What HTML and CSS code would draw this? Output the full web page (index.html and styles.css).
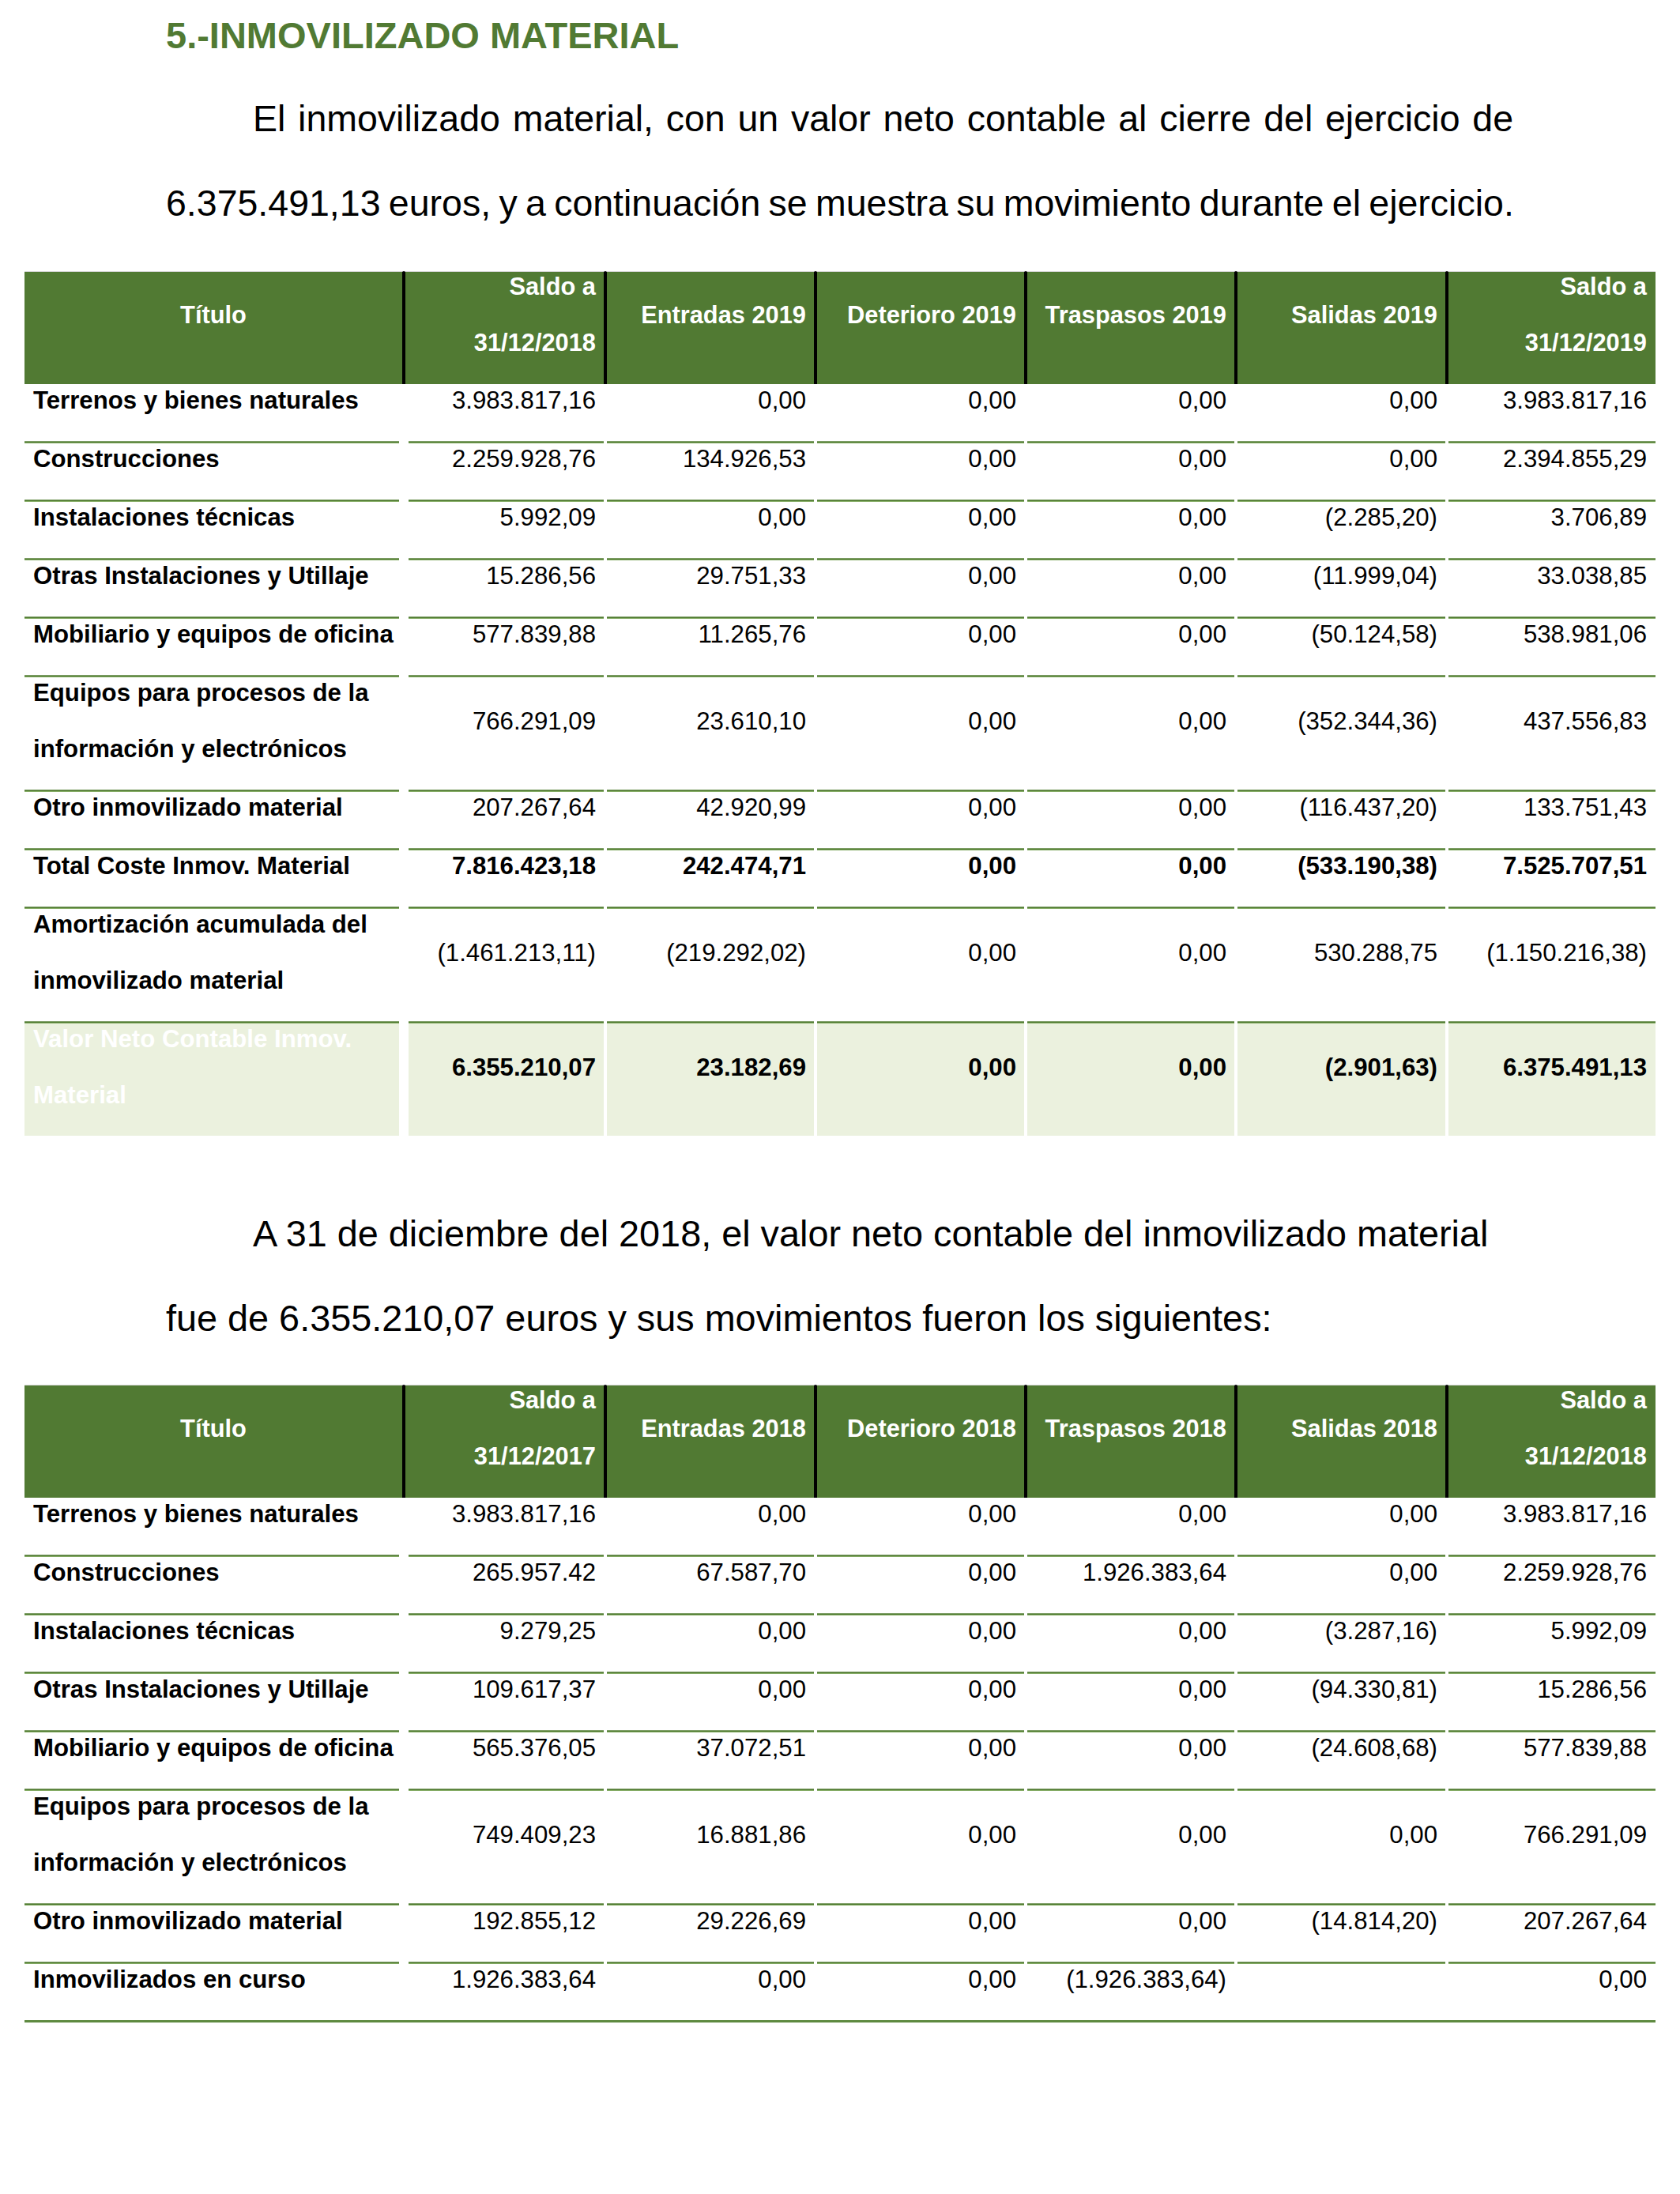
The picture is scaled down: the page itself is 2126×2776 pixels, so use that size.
FILE: index.html
```html
<!DOCTYPE html>
<html lang="es">
<head>
<meta charset="utf-8">
<title>5.-INMOVILIZADO MATERIAL</title>
<link rel="stylesheet" href="styles.css">
</head>
<body>
<div class="page">
  <h1 class="title">5.-INMOVILIZADO MATERIAL</h1>
  <p class="para">
    <span class="line first just">El inmovilizado material, con un valor neto contable al cierre del ejercicio de</span>
    <span class="line tight">6.375.491,13 euros, y a continuación se muestra su movimiento durante el ejercicio.</span>
  </p>

  <table class="tbl">
    <colgroup>
      <col class="w1"><col class="w2"><col class="w3"><col class="w3"><col class="w3"><col class="w6"><col class="w7">
    </colgroup>
    <thead>
      <tr>
        <th class="center"><div class="c">Título</div></th>
        <th><div class="c">Saldo a<br>31/12/2018</div></th>
        <th><div class="c">Entradas 2019</div></th>
        <th><div class="c">Deterioro 2019</div></th>
        <th><div class="c">Traspasos 2019</div></th>
        <th><div class="c">Salidas 2019</div></th>
        <th><div class="c">Saldo a<br>31/12/2019</div></th>
      </tr>
    </thead>
    <tbody>
      <tr class="first">
        <td class="lbl"><div class="c">Terrenos y bienes naturales</div></td>
        <td><div class="c">3.983.817,16</div></td><td><div class="c">0,00</div></td><td><div class="c">0,00</div></td><td><div class="c">0,00</div></td><td><div class="c">0,00</div></td><td><div class="c">3.983.817,16</div></td>
      </tr>
      <tr>
        <td class="lbl"><div class="c">Construcciones</div></td>
        <td><div class="c">2.259.928,76</div></td><td><div class="c">134.926,53</div></td><td><div class="c">0,00</div></td><td><div class="c">0,00</div></td><td><div class="c">0,00</div></td><td><div class="c">2.394.855,29</div></td>
      </tr>
      <tr>
        <td class="lbl"><div class="c">Instalaciones técnicas</div></td>
        <td><div class="c">5.992,09</div></td><td><div class="c">0,00</div></td><td><div class="c">0,00</div></td><td><div class="c">0,00</div></td><td><div class="c">(2.285,20)</div></td><td><div class="c">3.706,89</div></td>
      </tr>
      <tr>
        <td class="lbl"><div class="c">Otras Instalaciones y Utillaje</div></td>
        <td><div class="c">15.286,56</div></td><td><div class="c">29.751,33</div></td><td><div class="c">0,00</div></td><td><div class="c">0,00</div></td><td><div class="c">(11.999,04)</div></td><td><div class="c">33.038,85</div></td>
      </tr>
      <tr>
        <td class="lbl"><div class="c">Mobiliario y equipos de oficina</div></td>
        <td><div class="c">577.839,88</div></td><td><div class="c">11.265,76</div></td><td><div class="c">0,00</div></td><td><div class="c">0,00</div></td><td><div class="c">(50.124,58)</div></td><td><div class="c">538.981,06</div></td>
      </tr>
      <tr>
        <td class="lbl"><div class="c">Equipos para procesos de la<br>información y electrónicos</div></td>
        <td><div class="c">766.291,09</div></td><td><div class="c">23.610,10</div></td><td><div class="c">0,00</div></td><td><div class="c">0,00</div></td><td><div class="c">(352.344,36)</div></td><td><div class="c">437.556,83</div></td>
      </tr>
      <tr>
        <td class="lbl"><div class="c">Otro inmovilizado material</div></td>
        <td><div class="c">207.267,64</div></td><td><div class="c">42.920,99</div></td><td><div class="c">0,00</div></td><td><div class="c">0,00</div></td><td><div class="c">(116.437,20)</div></td><td><div class="c">133.751,43</div></td>
      </tr>
      <tr class="bold">
        <td class="lbl"><div class="c">Total Coste Inmov. Material</div></td>
        <td><div class="c">7.816.423,18</div></td><td><div class="c">242.474,71</div></td><td><div class="c">0,00</div></td><td><div class="c">0,00</div></td><td><div class="c">(533.190,38)</div></td><td><div class="c">7.525.707,51</div></td>
      </tr>
      <tr>
        <td class="lbl"><div class="c">Amortización acumulada del<br>inmovilizado material</div></td>
        <td><div class="c">(1.461.213,11)</div></td><td><div class="c">(219.292,02)</div></td><td><div class="c">0,00</div></td><td><div class="c">0,00</div></td><td><div class="c">530.288,75</div></td><td><div class="c">(1.150.216,38)</div></td>
      </tr>
      <tr class="bold net">
        <td class="lbl"><div class="c">Valor Neto Contable Inmov.<br>Material</div></td>
        <td><div class="c">6.355.210,07</div></td><td><div class="c">23.182,69</div></td><td><div class="c">0,00</div></td><td><div class="c">0,00</div></td><td><div class="c">(2.901,63)</div></td><td><div class="c">6.375.491,13</div></td>
      </tr>
    </tbody>
  </table>

  <p class="para para2">
    <span class="line first">A 31 de diciembre del 2018, el valor neto contable del inmovilizado material</span>
    <span class="line">fue de 6.355.210,07 euros y sus movimientos fueron los siguientes:</span>
  </p>

  <table class="tbl tbl2">
    <colgroup>
      <col class="w1"><col class="w2"><col class="w3"><col class="w3"><col class="w3"><col class="w6"><col class="w7">
    </colgroup>
    <thead>
      <tr>
        <th class="center"><div class="c">Título</div></th>
        <th><div class="c">Saldo a<br>31/12/2017</div></th>
        <th><div class="c">Entradas 2018</div></th>
        <th><div class="c">Deterioro 2018</div></th>
        <th><div class="c">Traspasos 2018</div></th>
        <th><div class="c">Salidas 2018</div></th>
        <th><div class="c">Saldo a<br>31/12/2018</div></th>
      </tr>
    </thead>
    <tbody>
      <tr class="first">
        <td class="lbl"><div class="c">Terrenos y bienes naturales</div></td>
        <td><div class="c">3.983.817,16</div></td><td><div class="c">0,00</div></td><td><div class="c">0,00</div></td><td><div class="c">0,00</div></td><td><div class="c">0,00</div></td><td><div class="c">3.983.817,16</div></td>
      </tr>
      <tr>
        <td class="lbl"><div class="c">Construcciones</div></td>
        <td><div class="c">265.957.42</div></td><td><div class="c">67.587,70</div></td><td><div class="c">0,00</div></td><td><div class="c">1.926.383,64</div></td><td><div class="c">0,00</div></td><td><div class="c">2.259.928,76</div></td>
      </tr>
      <tr>
        <td class="lbl"><div class="c">Instalaciones técnicas</div></td>
        <td><div class="c">9.279,25</div></td><td><div class="c">0,00</div></td><td><div class="c">0,00</div></td><td><div class="c">0,00</div></td><td><div class="c">(3.287,16)</div></td><td><div class="c">5.992,09</div></td>
      </tr>
      <tr>
        <td class="lbl"><div class="c">Otras Instalaciones y Utillaje</div></td>
        <td><div class="c">109.617,37</div></td><td><div class="c">0,00</div></td><td><div class="c">0,00</div></td><td><div class="c">0,00</div></td><td><div class="c">(94.330,81)</div></td><td><div class="c">15.286,56</div></td>
      </tr>
      <tr>
        <td class="lbl"><div class="c">Mobiliario y equipos de oficina</div></td>
        <td><div class="c">565.376,05</div></td><td><div class="c">37.072,51</div></td><td><div class="c">0,00</div></td><td><div class="c">0,00</div></td><td><div class="c">(24.608,68)</div></td><td><div class="c">577.839,88</div></td>
      </tr>
      <tr>
        <td class="lbl"><div class="c">Equipos para procesos de la<br>información y electrónicos</div></td>
        <td><div class="c">749.409,23</div></td><td><div class="c">16.881,86</div></td><td><div class="c">0,00</div></td><td><div class="c">0,00</div></td><td><div class="c">0,00</div></td><td><div class="c">766.291,09</div></td>
      </tr>
      <tr>
        <td class="lbl"><div class="c">Otro inmovilizado material</div></td>
        <td><div class="c">192.855,12</div></td><td><div class="c">29.226,69</div></td><td><div class="c">0,00</div></td><td><div class="c">0,00</div></td><td><div class="c">(14.814,20)</div></td><td><div class="c">207.267,64</div></td>
      </tr>
      <tr>
        <td class="lbl"><div class="c">Inmovilizados en curso</div></td>
        <td><div class="c">1.926.383,64</div></td><td><div class="c">0,00</div></td><td><div class="c">0,00</div></td><td><div class="c">(1.926.383,64)</div></td><td><div class="c"></div></td><td><div class="c">0,00</div></td>
      </tr>
    </tbody>
  </table>
</div>
</body>
</html>
```

FILE: styles.css
```css
html, body {
  margin: 0;
  padding: 0;
  background: #ffffff;
}

body {
  font-family: "Liberation Sans", Arial, sans-serif;
  color: #000000;
}

.page {
  width: 2126px;
  min-height: 2776px;
  box-sizing: border-box;
  padding-top: 18px;
}

.title {
  margin: 0 0 0 210px;
  font-size: 47px;
  line-height: 53px;
  font-weight: bold;
  color: #517a33;
}

.para {
  margin: 26px 211px 0 210px;
  font-size: 46.5px;
  line-height: 107px;
}

.para2 {
  margin-top: 71px;
  font-size: 46.8px;
}

.line {
  display: block;
  white-space: nowrap;
}

.line.first {
  padding-left: 110px;
}

.line.just {
  white-space: normal;
  text-align: justify;
  text-align-last: justify;
}

.line.tight {
  word-spacing: -2.6px;
}

/* tables */
.tbl {
  margin: 32px 0 0 31px;
  width: 2064px;
  table-layout: fixed;
  border-collapse: separate;
  border-spacing: 0;
  font-size: 31.2px;
}

.tbl2 {
  margin-top: 30px;
  border-bottom: 3px solid #5e8a40;
}

.w1 { width: 480px; }
.w2 { width: 255px; }
.w3 { width: 266px; }
.w6 { width: 267px; }
.w7 { width: 264px; }

.tbl th,
.tbl td {
  padding: 0;
  vertical-align: middle;
  white-space: nowrap;
  text-align: right;
}

.c {
  line-height: 71px;
  margin: -16px 0 16px;
}

.tbl th {
  background: #517a33;
  color: #ffffff;
  font-weight: bold;
  font-size: 30.8px;
  padding-right: 10px;
  border-top: 1px solid #d9d9d9;
}

.tbl th .c {
  margin: -17px 0 17px;
}

.tbl th.center {
  text-align: center;
  padding-right: 0;
}

.tbl th + th {
  border-left: 2px solid #000000;
}

.tbl th:not(:last-child) {
  border-right: 2px solid #000000;
}

.tbl th:last-child {
  padding-right: 11px;
}

.tbl td {
  padding-top: 3px;
  padding-right: 10px;
  border-left: 2px solid #ffffff;
  border-right: 2px solid #ffffff;
  background-image: linear-gradient(#7f9f68 0, #7f9f68 1px, #4f7a30 1px, #4f7a30 2px, #86ad66 2px, #86ad66 3px);
  background-repeat: no-repeat;
  background-size: 100% 3px;
  background-position: top left;
  background-origin: padding-box;
  background-clip: padding-box;
}

.tbl td:first-child {
  border-left: 0;
  border-right-width: 6px;
}

.tbl td:nth-child(2) {
  border-left-width: 6px;
}

.tbl td:last-child {
  border-right: 0;
  padding-right: 11px;
}

.tbl td.lbl {
  text-align: left;
  padding-left: 11px;
  padding-right: 0;
  font-weight: bold;
}

.tbl tr.first td {
  padding-top: 1px;
  background-image: none;
}

.tbl tr.bold td {
  font-weight: bold;
}

.tbl tr.net td {
  background-color: #ebf1de;
}

.tbl tr.net td.lbl {
  color: #ffffff;
}
```
